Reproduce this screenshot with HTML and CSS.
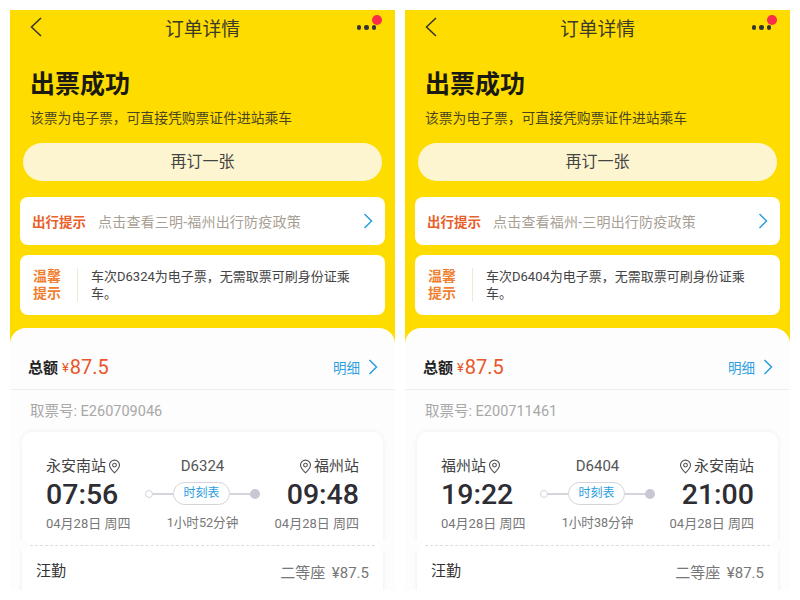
FILE: index.html
```html
<!DOCTYPE html>
<html lang="zh-CN">
<head>
    <meta charset="UTF-8">
    <title>订单详情</title>
    <link rel="stylesheet" href="styles.css">
</head>
<body>
    <svg class="icon-defs" width="0" height="0">
        <symbol id="pin" viewBox="0 0 14 16">
            <path d="M7 14.8C4.2 12.2 1.6 9.6 1.6 6.5a5.4 5.4 0 0 1 10.8 0c0 3.100-2.600 5.700-5.400 8.300z" fill="none" stroke="currentColor" stroke-width="1.200"/>
            <circle cx="7" cy="6.500" r="2" fill="none" stroke="currentColor" stroke-width="1.200"/>
        </symbol>
        <symbol id="chevron" viewBox="0 0 10 16">
            <path d="M1.500 1l7 7-7 7" fill="none" stroke="currentColor" stroke-width="1.500"/>
        </symbol>
    </svg>

    <!-- Outbound ticket -->
    <div class="phone">
        <div class="nav">
            <svg class="back" viewBox="0 0 12 20"><path d="M11 1L1.500 10 11 19" fill="none" stroke="#333" stroke-width="1.500"/></svg>
            <span class="nav-title">订单详情</span>
            <div class="more"><i></i><i></i><i></i><span class="red-dot"></span></div>
        </div>
        <h1 class="heading">出票成功</h1>
        <p class="sub">该票为电子票，可直接凭购票证件进站乘车</p>
        <div class="rebook">再订一张</div>
        <div class="card notice">
            <span class="notice-label">出行提示</span>
            <span class="notice-text">点击查看三明-福州出行防疫政策</span>
            <svg class="chevron"><use href="#chevron"/></svg>
        </div>
        <div class="card tip">
            <div class="tip-label">温馨<br>提示</div>
            <div class="tip-text">车次D6324为电子票，无需取票可刷身份证乘车。</div>
        </div>
        <div class="sheet">
            <div class="total">
                <span class="total-label">总额</span>
                <span class="yen">¥</span><span class="amount">87.5</span>
                <span class="detail">明细</span>
                <svg class="chevron"><use href="#chevron"/></svg>
            </div>
            <div class="pickup">取票号: E260709046</div>
            <div class="ticket">
                <div class="route">
                    <div class="stop">
                        <div class="station">永安南站<svg class="pin"><use href="#pin"/></svg></div>
                        <div class="time">07:56</div>
                        <div class="date">04月28日 周四</div>
                    </div>
                    <div class="middle">
                        <div class="train">D6324</div>
                        <div class="track">
                            <span class="dot-open"></span><span class="rail"></span>
                            <span class="pill">时刻表</span>
                            <span class="rail"></span><span class="dot-full"></span>
                        </div>
                        <div class="date">1小时52分钟</div>
                    </div>
                    <div class="stop stop-end">
                        <div class="station"><svg class="pin"><use href="#pin"/></svg>福州站</div>
                        <div class="time">09:48</div>
                        <div class="date">04月28日 周四</div>
                    </div>
                </div>
                <div class="tear"></div>
                <div class="passenger">
                    <span class="name">汪勤</span>
                    <span class="seat">二等座 ¥87.5</span>
                </div>
            </div>
        </div>
    </div>

    <!-- Return ticket -->
    <div class="phone">
        <div class="nav">
            <svg class="back" viewBox="0 0 12 20"><path d="M11 1L1.500 10 11 19" fill="none" stroke="#333" stroke-width="1.500"/></svg>
            <span class="nav-title">订单详情</span>
            <div class="more"><i></i><i></i><i></i><span class="red-dot"></span></div>
        </div>
        <h1 class="heading">出票成功</h1>
        <p class="sub">该票为电子票，可直接凭购票证件进站乘车</p>
        <div class="rebook">再订一张</div>
        <div class="card notice">
            <span class="notice-label">出行提示</span>
            <span class="notice-text">点击查看福州-三明出行防疫政策</span>
            <svg class="chevron"><use href="#chevron"/></svg>
        </div>
        <div class="card tip">
            <div class="tip-label">温馨<br>提示</div>
            <div class="tip-text">车次D6404为电子票，无需取票可刷身份证乘车。</div>
        </div>
        <div class="sheet">
            <div class="total">
                <span class="total-label">总额</span>
                <span class="yen">¥</span><span class="amount">87.5</span>
                <span class="detail">明细</span>
                <svg class="chevron"><use href="#chevron"/></svg>
            </div>
            <div class="pickup">取票号: E200711461</div>
            <div class="ticket">
                <div class="route">
                    <div class="stop">
                        <div class="station">福州站<svg class="pin"><use href="#pin"/></svg></div>
                        <div class="time">19:22</div>
                        <div class="date">04月28日 周四</div>
                    </div>
                    <div class="middle">
                        <div class="train">D6404</div>
                        <div class="track">
                            <span class="dot-open"></span><span class="rail"></span>
                            <span class="pill">时刻表</span>
                            <span class="rail"></span><span class="dot-full"></span>
                        </div>
                        <div class="date">1小时38分钟</div>
                    </div>
                    <div class="stop stop-end">
                        <div class="station"><svg class="pin"><use href="#pin"/></svg>永安南站</div>
                        <div class="time">21:00</div>
                        <div class="date">04月28日 周四</div>
                    </div>
                </div>
                <div class="tear"></div>
                <div class="passenger">
                    <span class="name">汪勤</span>
                    <span class="seat">二等座 ¥87.5</span>
                </div>
            </div>
        </div>
    </div>
</body>
</html>
```

FILE: styles.css
```css
/* Page: two phone captures side by side */
html, body {
    margin: 0;
    height: 600px;
    overflow: hidden;
    background-color: #fff;
}

body {
    display: flex;
    gap: 10px;
    padding: 10px;
    box-sizing: border-box;
    font-family: Roboto, "Noto Sans CJK SC", sans-serif;
    color: #333;
}

.icon-defs {
    position: absolute;
}

.phone {
    width: 385px;
    height: 580px;
    overflow: hidden;
    background-color: #ffdc00;
    flex-shrink: 0;
}

/* Nav bar */
.nav {
    height: 36px;
    padding-bottom: 2px;
    box-sizing: border-box;
    position: relative;
    display: flex;
    justify-content: center;
    align-items: center;
}

.nav-title {
    font-size: 18.800px;
    color: #3a3a2a;
}

.back {
    position: absolute;
    left: 20px;
    top: 7px;
    width: 12px;
    height: 20px;
}

.more {
    position: absolute;
    right: 19px;
    top: 15px;
    display: flex;
    gap: 3px;
}

.more i {
    width: 4.500px;
    height: 4.500px;
    border-radius: 50%;
    background-color: #333;
}

.red-dot {
    position: absolute;
    right: -6px;
    top: -10px;
    width: 10px;
    height: 10px;
    border-radius: 50%;
    background-color: #fb2d4a;
}

/* Header block */
.heading {
    margin: 21px 0 0 20px;
    font-size: 25px;
    line-height: 36px;
    font-weight: 700;
    color: #1a1a10;
}

.sub {
    margin: 5px 0 0 20px;
    font-size: 13.800px;
    line-height: 20px;
    color: #4a4520;
}

.rebook {
    margin: 15px 13px 0;
    height: 38px;
    line-height: 38px;
    border-radius: 19px;
    background-color: #fdf5cf;
    text-align: center;
    font-size: 16px;
    color: #444;
}

/* White cards */
.card {
    margin: 0 10px;
    background-color: #fff;
    border-radius: 8px;
    box-sizing: border-box;
    display: flex;
    align-items: center;
}

.notice {
    height: 48px;
    margin-top: 16px;
    padding: 0 12px;
}

.notice-label {
    font-size: 13.500px;
    font-weight: 700;
    color: #e8602a;
    margin-right: 12px;
}

.notice-text {
    flex: 1;
    font-size: 14px;
    letter-spacing: 0.2px;
    color: #a89f94;
}

.notice .chevron {
    color: #2a9de0;
}

.chevron {
    width: 10px;
    height: 16px;
}

.tip {
    height: 60px;
    margin-top: 10px;
    padding: 0 13px;
}

.tip-label {
    width: 31px;
    padding-right: 13px;
    height: 34px;
    border-right: 1px solid #f0e8d8;
    font-size: 14px;
    font-weight: 700;
    line-height: 17px;
    color: #f08030;
    flex-shrink: 0;
}

.tip-text {
    flex: 1;
    margin: 0 10px 0 13px;
    font-size: 13px;
    line-height: 17px;
    color: #444;
}

/* Bottom sheet */
.sheet {
    margin-top: 13px;
    background-color: #fdfdfd;
    border-radius: 16px 16px 0 0;
    height: 262px;
    overflow: hidden;
}

.total {
    height: 62px;
    padding: 16px 17px 0 18px;
    box-sizing: border-box;
    border-bottom: 1px solid #eee;
    display: flex;
    align-items: center;
}

.total-label {
    font-size: 15px;
    font-weight: 700;
    color: #222;
    margin-right: 4px;
}

.yen {
    font-size: 13px;
    color: #e8562a;
    margin: 2px 1px 0 0;
}

.amount {
    font-size: 20px;
    color: #e8562a;
    flex: 1;
}

.detail {
    font-size: 13.500px;
    color: #2ca0e0;
    margin-right: 8px;
}

.total .chevron {
    color: #2a9de0;
}

.pickup {
    margin: 12px 0 0 20px;
    font-size: 14.500px;
    line-height: 20px;
    color: #a8a8a8;
}

/* Ticket */
.ticket {
    position: relative;
    margin: 10px 12px 0;
    background-color: #fff;
    border-radius: 10px;
    box-shadow: 0 0 5px rgba(0, 0, 0, 0.07);
    height: 200px;
}

.route {
    height: 113px;
    padding: 23px 24px 0;
    box-sizing: border-box;
    display: flex;
    justify-content: space-between;
}

.stop {
    width: 86px;
    white-space: nowrap;
}

.stop-end {
    display: flex;
    flex-direction: column;
    align-items: flex-end;
}

.station {
    font-size: 15px;
    line-height: 22px;
    color: #444;
    display: flex;
    align-items: center;
}

.pin {
    width: 13px;
    height: 15px;
    margin: 0 2px;
    color: #555;
}

.time {
    font-size: 28.500px;
    line-height: 36px;
    font-weight: 500;
    color: #2d2d33;
}

.date {
    font-size: 13px;
    line-height: 22px;
    color: #777;
    white-space: nowrap;
}

.middle {
    display: flex;
    flex-direction: column;
    align-items: center;
}

.middle .date {
    margin-top: 2px;
    font-size: 12.600px;
}

.train {
    font-size: 15px;
    line-height: 22px;
    color: #555;
}

.track {
    height: 33px;
    display: flex;
    align-items: center;
}

.rail {
    width: 20px;
    height: 2px;
    background-color: #d4d4da;
}

.dot-open {
    width: 6px;
    height: 6px;
    border: 1.500px solid #d4d4da;
    border-radius: 50%;
}

.dot-full {
    width: 10px;
    height: 10px;
    border-radius: 50%;
    background-color: #c8c8d4;
}

.pill {
    width: 57px;
    height: 23px;
    box-sizing: border-box;
    border: 1px solid #d4d4da;
    border-radius: 12px;
    text-align: center;
    font-size: 12px;
    line-height: 21px;
    color: #2a9de0;
}

/* Dashed line with the two notches */
.tear {
    position: relative;
    margin: 0 8px;
    border-top: 1px dashed #ddd;
}

.tear::before, .tear::after {
    content: "";
    position: absolute;
    top: -7px;
    width: 12px;
    height: 12px;
    border-radius: 50%;
    background-color: #fdfdfd;
}

.tear::before {
    left: -14px;
}

.tear::after {
    right: -14px;
}

.passenger {
    padding: 14px 14px 0;
    display: flex;
    justify-content: space-between;
    align-items: center;
}

.name {
    font-size: 15px;
    line-height: 22px;
    color: #333;
}

.seat {
    font-size: 15px;
    word-spacing: 3px;
    color: #777;
}
```
